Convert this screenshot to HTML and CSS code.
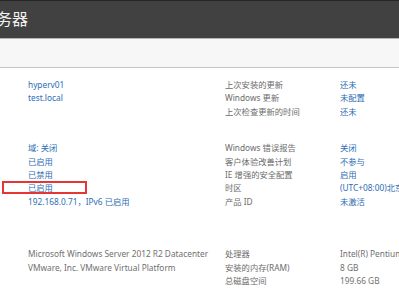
FILE: index.html
```html
<!DOCTYPE html>
<html lang="zh-CN">
<head>
  <meta charset="UTF-8" />
  <title>服务器属性</title>
  <link rel="stylesheet" href="styles.css">
</head>
<body>
  <div class="header">
    <h1>服务器</h1>
  </div>
  <div class="toolbar"></div>

  <div class="props">
    <div class="section">
      <div class="val">hyperv01</div>
      <div class="label">上次安装的更新</div>
      <div class="val">还未</div>

      <div class="val">test.local</div>
      <div class="label">Windows 更新</div>
      <div class="val">未配置</div>

      <div></div>
      <div class="label">上次检查更新的时间</div>
      <div class="val">还未</div>
    </div>

    <div class="section second">
      <div class="val">域: 关闭</div>
      <div class="label">Windows 错误报告</div>
      <div class="val">关闭</div>

      <div class="val">已启用</div>
      <div class="label">客户体验改善计划</div>
      <div class="val">不参与</div>

      <div class="val">已禁用</div>
      <div class="label">IE 增强的安全配置</div>
      <div class="val">启用</div>

      <div class="val marked">已启用</div>
      <div class="label">时区</div>
      <div class="val">(UTC+08:00)北京，重庆，香港特别行政区，乌鲁木齐</div>

      <div class="val">192.168.0.71，IPv6 已启用</div>
      <div class="label">产品 ID</div>
      <div class="val">未激活</div>
    </div>

    <div class="section third">
      <div class="plain">Microsoft Windows Server 2012 R2 Datacenter</div>
      <div class="label">处理器</div>
      <div class="plain">Intel(R) Pentium(R) CPU G3240 @ 3.10GHz</div>

      <div class="plain">VMware, Inc. VMware Virtual Platform</div>
      <div class="label">安装的内存(RAM)</div>
      <div class="plain">8 GB</div>

      <div></div>
      <div class="label">总磁盘空间</div>
      <div class="plain">199.66 GB</div>
    </div>
  </div>
  <div class="footer"></div>
</body>
</html>
```

FILE: styles.css
```css
body {
  margin: 0;
  width: 399px;
  height: 300px;
  overflow: hidden;
  background: #fff;
  font-family: 'Noto Sans', 'Noto Sans CJK SC', sans-serif;
  font-size: 8.3px;
}

.header {
  height: 37px;
  background: #414141;
  border-top: 1px solid #262626;
  border-bottom: 1px solid #b4b4b4;
  overflow: hidden;
}

.header h1 {
  margin: 0 0 0 -20px;
  padding-top: 8px;
  font-size: 16px;
  font-weight: normal;
  line-height: 20px;
  color: #f0f0f0;
  white-space: nowrap;
}

.toolbar {
  height: 28px;
  background: #f7f7f7;
  border-bottom: 1px solid #c4c4c4;
}

.props {
  height: 228px;
  padding: 10px 0 0 28px;
}

.section {
  display: grid;
  grid-template-columns: 197px 115px 1fr;
  grid-auto-rows: 13.4px;
  line-height: 13.4px;
  white-space: nowrap;
}

.section.second {
  margin-top: 23px;
}

.section.third {
  margin-top: 39px;
}

.section > div {
  overflow: visible;
}

.label {
  color: #6b6b6b;
}

.val {
  color: #2b6db5;
}

.plain {
  color: #707070;
}

.marked {
  position: relative;
}

.marked::after {
  content: '';
  position: absolute;
  left: -26px;
  top: 0;
  width: 81px;
  height: 9px;
  border: 2px solid #e53535;
}

.footer {
  height: 2px;
  background: #a6a6a6;
}
```
